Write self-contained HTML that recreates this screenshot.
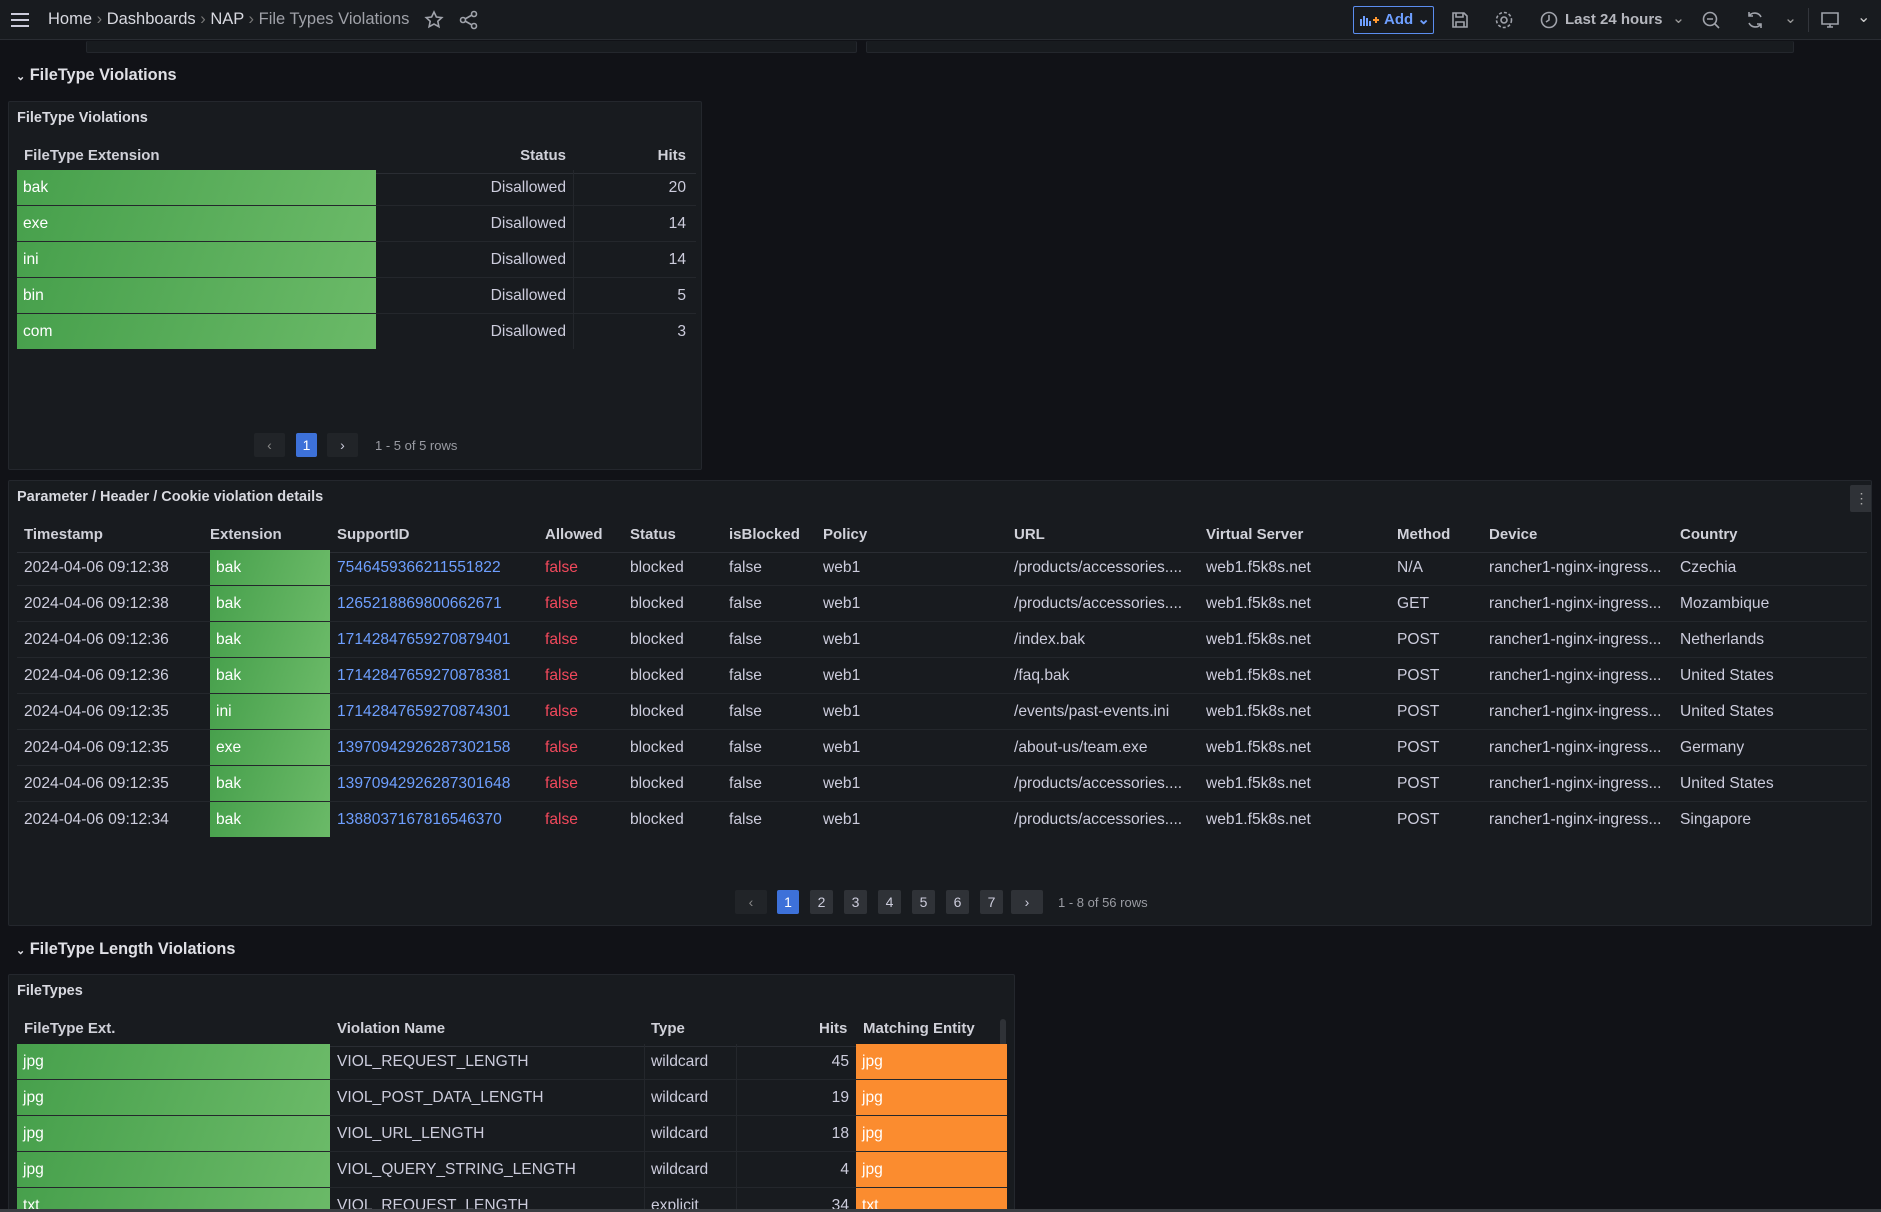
<!DOCTYPE html>
<html><head><meta charset="utf-8"><style>
*{margin:0;padding:0;box-sizing:border-box}
html{width:1881px;height:1212px;overflow:hidden}
body{width:1881px;height:1212px;background:#111217;font-family:"Liberation Sans",sans-serif;color:#ccccdc;font-size:15.6px;position:relative;overflow:hidden}
.a{position:absolute}
.top{left:0;top:0;width:1881px;height:40px;background:#181b1f;border-bottom:1px solid #2a2d33}
.panel{position:absolute;background:#181b1f;border:1px solid #24272d;border-radius:2px;overflow:hidden}
.pt{position:absolute;font-size:14.5px;font-weight:bold;color:#d8d9e0}
.row{position:absolute;height:36px;border-bottom:1px solid #24272c;line-height:35px;white-space:nowrap}
.row span,.hd span{position:absolute;top:0}
.hd{position:absolute;height:36px;line-height:36px;font-weight:bold;font-size:15px;color:#d0d1d9;border-bottom:1px solid #2a2d33}
.g{background:linear-gradient(110deg,#47a04c,#6bba68);color:#fff;height:35px;padding-left:6px}
.o{background:#fb8c2f;color:#fff;height:35px;padding-left:6px}
.lnk{color:#6e9fff}.f{color:#f2495c}
.pb{position:absolute;height:24px;line-height:24px;text-align:center;background:#2f3237;border-radius:2px;font-size:14px;color:#ccccdc}
.rh{position:absolute;font-size:16.3px;font-weight:bold;color:#e0e0e6}
.ic{stroke:#a0a3ab;fill:none;stroke-width:1.6}
</style></head><body>
<div class="a top">
 <svg class="a" style="left:10px;top:11px" width="20" height="18"><path d="M1 3h18M1 9h18M1 15h18" stroke="#ccccdc" stroke-width="2"/></svg>
 <div class="a" style="left:48px;top:10px;font-size:16.5px;color:#d8d9e0">Home <span style="color:#777">›</span> Dashboards <span style="color:#777">›</span> NAP <span style="color:#777">›</span> <span style="color:#9fa1a8">File Types Violations</span></div>
 <svg class="a" style="left:424px;top:10px" width="20" height="20"><path class="ic" d="M10 2l2.4 5 5.4.6-4 3.7 1.1 5.4L10 14l-4.9 2.7 1.1-5.4-4-3.7 5.4-.6z"/></svg>
 <svg class="a" style="left:459px;top:10px" width="20" height="20"><circle class="ic" cx="15" cy="4" r="2.5"/><circle class="ic" cx="4" cy="10" r="2.5"/><circle class="ic" cx="15" cy="16" r="2.5"/><path class="ic" d="M6 9l7-4M6 11l7 4"/></svg>
 <div class="a" style="left:1353px;top:6px;width:81px;height:28px;border:1px solid #5b8def;border-radius:2px;color:#6e9fff;font-weight:bold;line-height:26px;padding-left:30px;font-size:15px">Add ⌄</div>
 <svg class="a" style="left:1360px;top:13px" width="20" height="14"><path d="M1 13V6M4 13V3M7 13V5M10 13V8" stroke="#6e9fff" stroke-width="2"/><path d="M13 7h6M16 4v6" stroke="#ff9830" stroke-width="2"/></svg>
 <svg class="a" style="left:1451px;top:11px" width="18" height="18"><path class="ic" d="M2 2h11l3 3v11H2zM5 2v4h7V2M5 16v-5h8v5"/></svg>
 <svg class="a" style="left:1494px;top:10px" width="20" height="20"><circle class="ic" cx="10" cy="10" r="3"/><circle class="ic" cx="10" cy="10" r="7.5" stroke-dasharray="3 2"/></svg>
 <svg class="a" style="left:1539px;top:10px" width="20" height="20"><circle class="ic" cx="10" cy="10" r="7.5"/><path class="ic" d="M10 5v5l-3 2"/></svg>
 <div class="a" style="left:1565px;top:11px;color:#b5b7be;font-weight:bold;font-size:15px">Last 24 hours</div>
 <div class="a" style="left:1672px;top:9px;color:#999">⌄</div>
 <svg class="a" style="left:1701px;top:10px" width="20" height="20"><circle class="ic" cx="9" cy="9" r="6.5"/><path class="ic" d="M6 9h6M14 14l4 4"/></svg>
 <svg class="a" style="left:1745px;top:10px" width="20" height="20"><path class="ic" d="M16 7a7 7 0 0 0-12-1M4 13a7 7 0 0 0 12 1M4 2v4h4M16 18v-4h-4"/></svg>
 <div class="a" style="left:1784px;top:9px;color:#999">⌄</div>
 <div class="a" style="left:1808px;top:8px;width:1px;height:24px;background:#33363c"></div>
 <svg class="a" style="left:1820px;top:10px" width="20" height="20"><path class="ic" d="M2 3h16v11H2zM7 17h6M10 14v3"/></svg>
 <div class="a" style="left:1857px;top:7px;color:#ccc;font-size:16px">⌄</div>
</div>
<div class="panel" style="left:86px;top:41px;width:771px;height:12px;border-top:none"></div>
<div class="panel" style="left:866px;top:41px;width:928px;height:12px;border-top:none"></div>

<div class="rh" style="left:16px;top:66px"><span style="font-size:11px">⌄</span> FileType Violations</div>
<div class="panel" style="left:8px;top:101px;width:694px;height:369px">
 <div class="pt" style="left:8px;top:8px">FileType Violations</div>
 <div class="hd" style="left:8px;top:36px;width:679px"><span style="left:7px">FileType Extension</span><span style="right:130px">Status</span><span style="right:10px">Hits</span></div>
 <div class="row" style="left:8px;top:68px;width:679px"><span class="g" style="left:0;width:359px">bak</span><span style="right:130px">Disallowed</span><span style="left:556px;height:35px;border-left:1px solid #24272c"></span><span style="right:10px">20</span></div>
 <div class="row" style="left:8px;top:104px;width:679px"><span class="g" style="left:0;width:359px">exe</span><span style="right:130px">Disallowed</span><span style="left:556px;height:35px;border-left:1px solid #24272c"></span><span style="right:10px">14</span></div>
 <div class="row" style="left:8px;top:140px;width:679px"><span class="g" style="left:0;width:359px">ini</span><span style="right:130px">Disallowed</span><span style="left:556px;height:35px;border-left:1px solid #24272c"></span><span style="right:10px">14</span></div>
 <div class="row" style="left:8px;top:176px;width:679px"><span class="g" style="left:0;width:359px">bin</span><span style="right:130px">Disallowed</span><span style="left:556px;height:35px;border-left:1px solid #24272c"></span><span style="right:10px">5</span></div>
 <div class="row" style="left:8px;top:212px;width:679px;border-bottom:none"><span class="g" style="left:0;width:359px">com</span><span style="right:130px">Disallowed</span><span style="left:556px;height:35px;border-left:1px solid #24272c"></span><span style="right:10px">3</span></div>
 <div class="pb" style="left:245px;top:331px;width:31px;background:#212428;color:#888">‹</div>
 <div class="pb" style="left:287px;top:331px;width:21px;background:#3d71d9;color:#fff">1</div>
 <div class="pb" style="left:318px;top:331px;width:31px;background:#212428">›</div>
 <div class="a" style="left:366px;top:336px;font-size:13px;color:#9a9ca3">1 - 5 of 5 rows</div>
</div>

<div class="panel" style="left:8px;top:480px;width:1864px;height:446px">
 <div class="pt" style="left:8px;top:8px">Parameter / Header / Cookie violation details</div>
 <div class="a" style="left:1841px;top:4px;width:23px;height:27px;background:#2f3237;border-radius:2px;color:#aaa;text-align:center;line-height:27px;font-size:14px">⋮</div>
 <div class="hd" style="left:8px;top:36px;width:1850px"><span style="left:7px">Timestamp</span><span style="left:193px">Extension</span><span style="left:320px">SupportID</span><span style="left:528px">Allowed</span><span style="left:613px">Status</span><span style="left:712px">isBlocked</span><span style="left:806px">Policy</span><span style="left:997px">URL</span><span style="left:1189px">Virtual Server</span><span style="left:1380px">Method</span><span style="left:1472px">Device</span><span style="left:1663px">Country</span></div>
 <div class="row" style="left:8px;top:69px;width:1850px"><span style="left:7px">2024-04-06 09:12:38</span><span class="g" style="left:193px;width:120px">bak</span><span class="lnk" style="left:320px">7546459366211551822</span><span class="f" style="left:528px">false</span><span style="left:613px">blocked</span><span style="left:712px">false</span><span style="left:806px">web1</span><span style="left:997px">/products/accessories....</span><span style="left:1189px">web1.f5k8s.net</span><span style="left:1380px">N/A</span><span style="left:1472px">rancher1-nginx-ingress...</span><span style="left:1663px">Czechia</span></div>
 <div class="row" style="left:8px;top:105px;width:1850px"><span style="left:7px">2024-04-06 09:12:38</span><span class="g" style="left:193px;width:120px">bak</span><span class="lnk" style="left:320px">1265218869800662671</span><span class="f" style="left:528px">false</span><span style="left:613px">blocked</span><span style="left:712px">false</span><span style="left:806px">web1</span><span style="left:997px">/products/accessories....</span><span style="left:1189px">web1.f5k8s.net</span><span style="left:1380px">GET</span><span style="left:1472px">rancher1-nginx-ingress...</span><span style="left:1663px">Mozambique</span></div>
 <div class="row" style="left:8px;top:141px;width:1850px"><span style="left:7px">2024-04-06 09:12:36</span><span class="g" style="left:193px;width:120px">bak</span><span class="lnk" style="left:320px">17142847659270879401</span><span class="f" style="left:528px">false</span><span style="left:613px">blocked</span><span style="left:712px">false</span><span style="left:806px">web1</span><span style="left:997px">/index.bak</span><span style="left:1189px">web1.f5k8s.net</span><span style="left:1380px">POST</span><span style="left:1472px">rancher1-nginx-ingress...</span><span style="left:1663px">Netherlands</span></div>
 <div class="row" style="left:8px;top:177px;width:1850px"><span style="left:7px">2024-04-06 09:12:36</span><span class="g" style="left:193px;width:120px">bak</span><span class="lnk" style="left:320px">17142847659270878381</span><span class="f" style="left:528px">false</span><span style="left:613px">blocked</span><span style="left:712px">false</span><span style="left:806px">web1</span><span style="left:997px">/faq.bak</span><span style="left:1189px">web1.f5k8s.net</span><span style="left:1380px">POST</span><span style="left:1472px">rancher1-nginx-ingress...</span><span style="left:1663px">United States</span></div>
 <div class="row" style="left:8px;top:213px;width:1850px"><span style="left:7px">2024-04-06 09:12:35</span><span class="g" style="left:193px;width:120px">ini</span><span class="lnk" style="left:320px">17142847659270874301</span><span class="f" style="left:528px">false</span><span style="left:613px">blocked</span><span style="left:712px">false</span><span style="left:806px">web1</span><span style="left:997px">/events/past-events.ini</span><span style="left:1189px">web1.f5k8s.net</span><span style="left:1380px">POST</span><span style="left:1472px">rancher1-nginx-ingress...</span><span style="left:1663px">United States</span></div>
 <div class="row" style="left:8px;top:249px;width:1850px"><span style="left:7px">2024-04-06 09:12:35</span><span class="g" style="left:193px;width:120px">exe</span><span class="lnk" style="left:320px">13970942926287302158</span><span class="f" style="left:528px">false</span><span style="left:613px">blocked</span><span style="left:712px">false</span><span style="left:806px">web1</span><span style="left:997px">/about-us/team.exe</span><span style="left:1189px">web1.f5k8s.net</span><span style="left:1380px">POST</span><span style="left:1472px">rancher1-nginx-ingress...</span><span style="left:1663px">Germany</span></div>
 <div class="row" style="left:8px;top:285px;width:1850px"><span style="left:7px">2024-04-06 09:12:35</span><span class="g" style="left:193px;width:120px">bak</span><span class="lnk" style="left:320px">13970942926287301648</span><span class="f" style="left:528px">false</span><span style="left:613px">blocked</span><span style="left:712px">false</span><span style="left:806px">web1</span><span style="left:997px">/products/accessories....</span><span style="left:1189px">web1.f5k8s.net</span><span style="left:1380px">POST</span><span style="left:1472px">rancher1-nginx-ingress...</span><span style="left:1663px">United States</span></div>
 <div class="row" style="left:8px;top:321px;width:1850px;border-bottom:none"><span style="left:7px">2024-04-06 09:12:34</span><span class="g" style="left:193px;width:120px">bak</span><span class="lnk" style="left:320px">1388037167816546370</span><span class="f" style="left:528px">false</span><span style="left:613px">blocked</span><span style="left:712px">false</span><span style="left:806px">web1</span><span style="left:997px">/products/accessories....</span><span style="left:1189px">web1.f5k8s.net</span><span style="left:1380px">POST</span><span style="left:1472px">rancher1-nginx-ingress...</span><span style="left:1663px">Singapore</span></div>
 <div class="pb" style="left:726px;top:409px;width:32px;background:#212428;color:#888">‹</div>
 <div class="pb" style="left:768px;top:409px;width:22px;background:#3d71d9;color:#fff">1</div>
 <div class="pb" style="left:801px;top:409px;width:23px">2</div>
 <div class="pb" style="left:835px;top:409px;width:23px">3</div>
 <div class="pb" style="left:869px;top:409px;width:23px">4</div>
 <div class="pb" style="left:903px;top:409px;width:23px">5</div>
 <div class="pb" style="left:937px;top:409px;width:23px">6</div>
 <div class="pb" style="left:971px;top:409px;width:23px">7</div>
 <div class="pb" style="left:1002px;top:409px;width:32px">›</div>
 <div class="a" style="left:1049px;top:414px;font-size:13px;color:#9a9ca3">1 - 8 of 56 rows</div>
</div>

<div class="rh" style="left:16px;top:940px"><span style="font-size:11px">⌄</span> FileType Length Violations</div>
<div class="panel" style="left:8px;top:974px;width:1007px;height:238px;border-bottom:none">
 <div class="pt" style="left:8px;top:8px">FileTypes</div>
 <div class="a" style="left:991px;top:44px;width:6px;height:230px;background:#2f3237;border-radius:3px"></div>
 <div class="hd" style="left:8px;top:36px;width:990px"><span style="left:7px">FileType Ext.</span><span style="left:320px">Violation Name</span><span style="left:634px">Type</span><span style="left:802px">Hits</span><span style="left:846px">Matching Entity</span></div>
 <div class="row" style="left:8px;top:69px;width:990px"><span class="g" style="left:0;width:313px">jpg</span><span style="left:320px">VIOL_REQUEST_LENGTH</span><span style="left:627px;height:35px;border-left:1px solid #24272c"></span><span style="left:634px">wildcard</span><span style="left:719px;height:35px;border-left:1px solid #24272c"></span><span style="right:158px">45</span><span class="o" style="left:839px;width:151px">jpg</span></div>
 <div class="row" style="left:8px;top:105px;width:990px"><span class="g" style="left:0;width:313px">jpg</span><span style="left:320px">VIOL_POST_DATA_LENGTH</span><span style="left:627px;height:35px;border-left:1px solid #24272c"></span><span style="left:634px">wildcard</span><span style="left:719px;height:35px;border-left:1px solid #24272c"></span><span style="right:158px">19</span><span class="o" style="left:839px;width:151px">jpg</span></div>
 <div class="row" style="left:8px;top:141px;width:990px"><span class="g" style="left:0;width:313px">jpg</span><span style="left:320px">VIOL_URL_LENGTH</span><span style="left:627px;height:35px;border-left:1px solid #24272c"></span><span style="left:634px">wildcard</span><span style="left:719px;height:35px;border-left:1px solid #24272c"></span><span style="right:158px">18</span><span class="o" style="left:839px;width:151px">jpg</span></div>
 <div class="row" style="left:8px;top:177px;width:990px"><span class="g" style="left:0;width:313px">jpg</span><span style="left:320px">VIOL_QUERY_STRING_LENGTH</span><span style="left:627px;height:35px;border-left:1px solid #24272c"></span><span style="left:634px">wildcard</span><span style="left:719px;height:35px;border-left:1px solid #24272c"></span><span style="right:158px">4</span><span class="o" style="left:839px;width:151px">jpg</span></div>
 <div class="row" style="left:8px;top:213px;width:990px"><span class="g" style="left:0;width:313px">txt</span><span style="left:320px">VIOL_REQUEST_LENGTH</span><span style="left:627px;height:35px;border-left:1px solid #24272c"></span><span style="left:634px">explicit</span><span style="left:719px;height:35px;border-left:1px solid #24272c"></span><span style="right:158px">34</span><span class="o" style="left:839px;width:151px">txt</span></div>
</div>
<div class="a" style="left:0;top:1209px;width:1881px;height:3px;background:#3a3d42"></div>
</body></html>
